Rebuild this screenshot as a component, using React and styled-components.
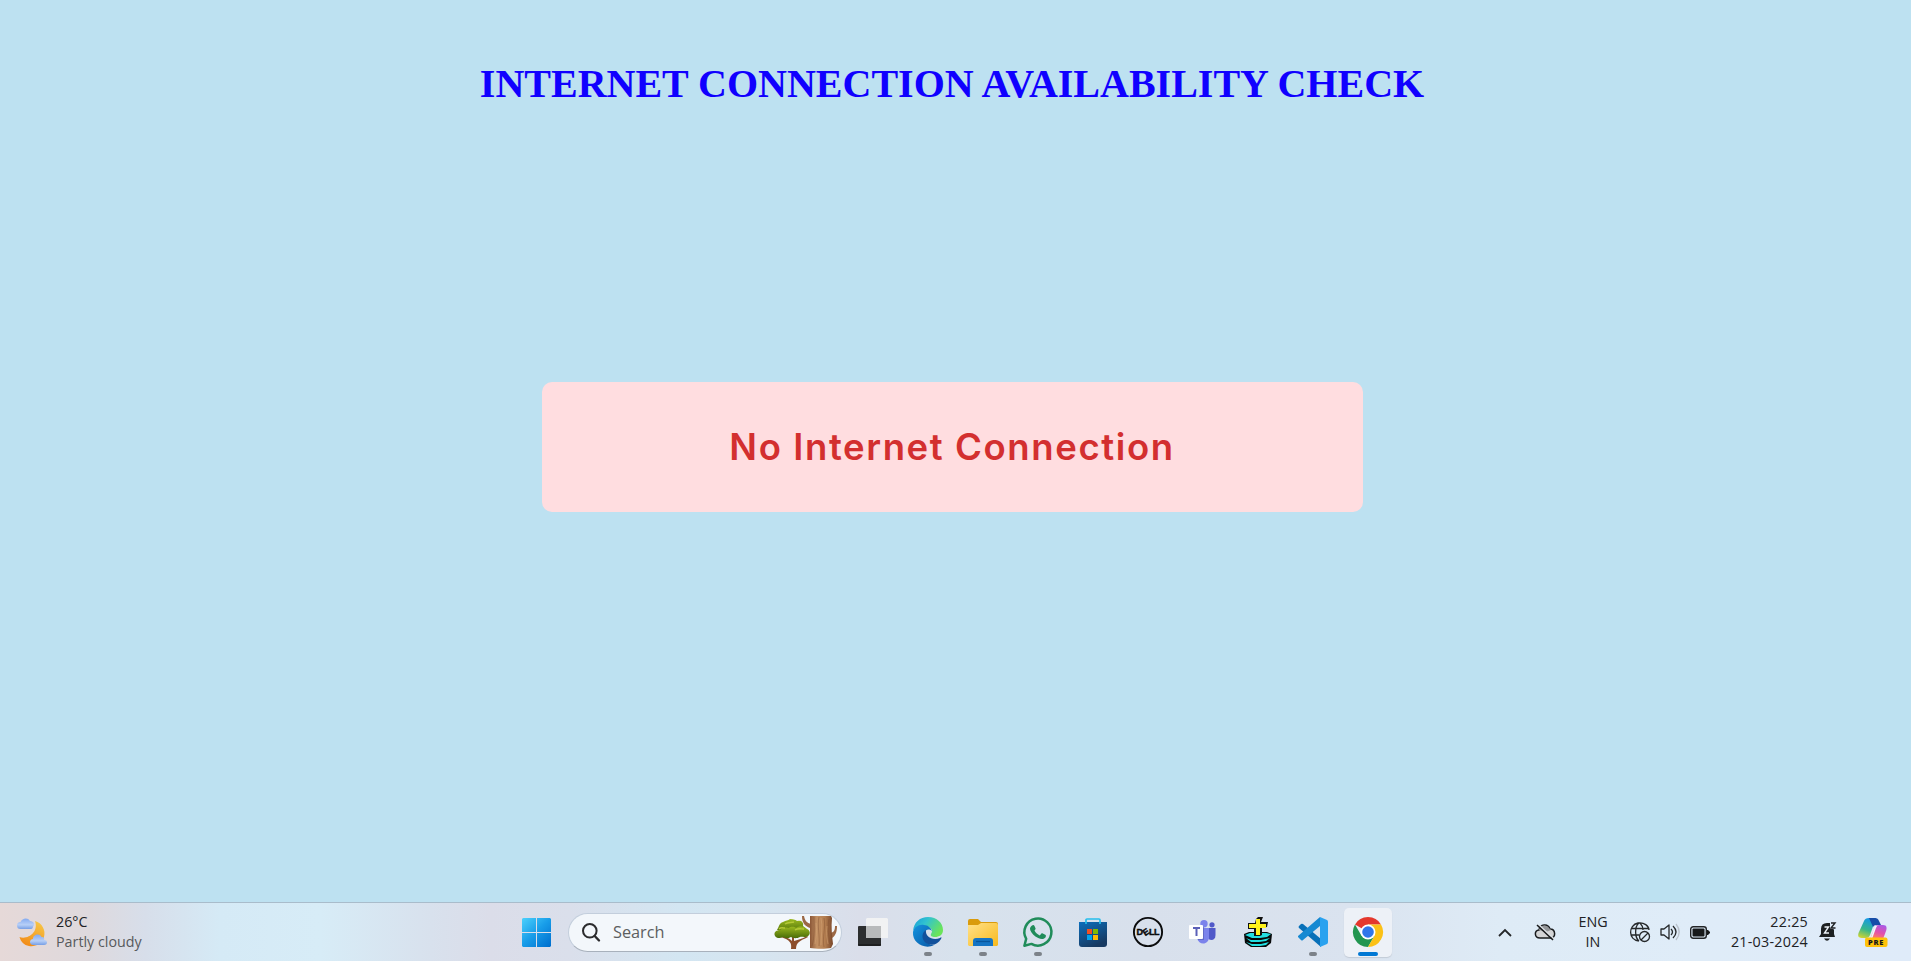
import React from "react";
import styled, { createGlobalStyle } from "styled-components";

const GlobalStyle = createGlobalStyle`
  *, *::before, *::after { box-sizing: border-box; }
  body { margin: 0; background: #bde1f1; overflow: hidden; }
  svg { display: block; flex: none; overflow: visible; }
`;

const Screen = styled.div`
  height: 100vh;
  display: flex;
  flex-direction: column;
`;

const Page = styled.main`
  flex: 1;
  display: flex;
  flex-direction: column;
  align-items: center;
  padding-right: 7px;
`;

const Title = styled.h1`
  margin: 61px 0 0;
  height: 46px;
  font: bold 40px/46px "Liberation Serif", "Times New Roman", serif;
  color: #1000ff;
  white-space: nowrap;
`;

const StatusCard = styled.section`
  width: 821px;
  height: 130px;
  margin-top: 275px;
  border-radius: 10px;
  background: #ffdde0;
  display: flex;
  align-items: center;
  justify-content: center;
`;

const StatusText = styled.p`
  margin: 0;
  font: 600 36.5px/54px Inter, "Open Sans", sans-serif;
  letter-spacing: 1.6px;
  color: #d32f2f;
  white-space: nowrap;
`;

const Taskbar = styled.footer`
  height: 59px;
  border-top: 1px solid #a9bccb;
  display: flex;
  align-items: center;
  font-family: "Open Sans", "Noto Sans", sans-serif;
  background: linear-gradient(90deg, #e6d9d8 0, #ded9dd 90px, #d7deea 145px, #d5eaf6 220px, #d7ecf7 320px,
    #d8e1ed 430px, #dbdde9 490px, #dadfeb 570px, #d3e6f2 680px, #d6e5f0 760px, #dadeea 860px,
    #d7e2ed 960px, #d8e0ec 1150px, #dae3ef 1350px, #deebf6 1500px, #dfecf8 1700px, #dfebf9 1911px);
`;

const Weather = styled.div`
  width: 509px;
  padding-left: 17px;
  display: flex;
  align-items: center;
  gap: 9px;
`;

const Lines = styled.div`
  display: flex;
  flex-direction: column;
  width: ${(p) => p.$width || "auto"};
  text-align: ${(p) => p.$align || "left"};
`;

const Line = styled.span`
  font-size: 14.3px;
  line-height: 20px;
  letter-spacing: ${(p) => p.$spacing || 0}px;
  color: ${(p) => (p.$muted ? "#57595c" : "#202124")};
  white-space: nowrap;
`;

const Apps = styled.nav`
  display: flex;
  align-items: center;
  height: 58px;
`;

const AppSlot = styled.div`
  position: relative;
  width: 55px;
  height: 58px;
  display: flex;
  align-items: center;
  justify-content: center;
`;

const AppTile = styled.div`
  width: 48px;
  height: 49px;
  border-radius: 5px;
  display: flex;
  align-items: center;
  justify-content: center;
  background: ${(p) => (p.$active ? "#edf1f7" : "transparent")};
  box-shadow: ${(p) => (p.$active ? "0 1px 1px #c3cbd6" : "none")};
`;

const Indicator = styled.span`
  position: absolute;
  bottom: 5px;
  left: 50%;
  width: ${(p) => (p.$active ? 20 : 8)}px;
  height: 4px;
  border-radius: 2px;
  transform: translateX(-50%);
  background: ${(p) => (p.$active ? "#0078d4" : "#7c8289")};
`;

const StartButton = styled.div`
  width: 59px;
  padding-left: 13px;
`;

const SearchBox = styled.div`
  width: 274px;
  height: 39px;
  margin-right: 3px;
  padding: 0 4px 0 13px;
  border: 1px solid #c3cedc;
  border-bottom-color: #a8b1bc;
  border-radius: 20px;
  background: #f3f7fb;
  display: flex;
  align-items: center;
`;

const SearchLabel = styled.span`
  flex: 1;
  padding-left: 13px;
  font-size: 16.3px;
  line-height: 22px;
  color: #5c5e60;
`;

const Tray = styled.div`
  margin-left: auto;
  padding-right: 23px;
  display: flex;
  align-items: center;
`;

const TrayGroup = styled.div`
  display: flex;
  align-items: center;
  gap: ${(p) => p.$gap || 0}px;
  margin-left: ${(p) => p.$before || 0}px;
  margin-right: ${(p) => p.$after || 0}px;
`;

const WeatherIcon = () => (
  <svg width="30" height="29" viewBox="0 0 30 29">
    <defs>
      <linearGradient id="moon" x1="0.8" y1="0" x2="0.3" y2="1">
        <stop stopColor="#f6c747" /><stop offset="1" stopColor="#f28b18" />
      </linearGradient>
      <linearGradient id="cloud" x1="0" y1="0" x2="0" y2="1">
        <stop stopColor="#83aaf1" /><stop offset=".6" stopColor="#b7cff7" /><stop offset="1" stopColor="#779fe5" />
      </linearGradient>
    </defs>
    <path d="M18 3C25 5 29 12 27 19c-2 7-9 10-15 9-5-1-8-4-9.500-9C11 22 22 14 18 3Z" fill="url(#moon)" />
    <path d="M3.500 11a3.500 3.500 0 0 1 0-7C5 0 11-1 13 3c4 0 5 4 3 5.500 0 2-1 2.500-3 2.500Z" fill="url(#cloud)" />
    <path d="M16 27c-4 0-4-6 0-6 0-5 7-6 8.500-2 3 0 3 2 2.500 3 4 0 4 5 0 5Z" fill="url(#cloud)" />
  </svg>
);

const WindowsIcon = () => (
  <svg width="29" height="29" viewBox="0 0 29 29">
    <defs>
      <linearGradient id="win" gradientUnits="userSpaceOnUse" x1="0" y1="0" x2="27" y2="29">
        <stop stopColor="#4dd1fc" /><stop offset=".5" stopColor="#189de9" /><stop offset="1" stopColor="#0070cf" />
      </linearGradient>
    </defs>
    <path d="M1 0H14V14H0V1ZM15 0H28l1 1V14H15ZM0 15H14V29H1l-1-1ZM15 15H29V28l-1 1H15Z" fill="url(#win)" />
  </svg>
);

const SearchIcon = () => (
  <svg width="18" height="19" viewBox="0 0 18 19" fill="none" stroke="#2b2b2d">
    <circle cx="7.800" cy="7.800" r="6.800" strokeWidth="2" />
    <path d="m12.700 13 4.300 4.500" strokeWidth="2.400" strokeLinecap="round" />
  </svg>
);

const TreesIcon = () => (
  <svg width="63" height="33" viewBox="0 0 63 33">
    <defs>
      <linearGradient id="bark">
        <stop stopColor="#8b5737" /><stop offset=".3" stopColor="#c39164" /><stop offset=".65" stopColor="#b47e50" /><stop offset="1" stopColor="#784629" />
      </linearGradient>
      <linearGradient id="leaf" x1="0" y1="0" x2="0" y2="1">
        <stop stopColor="#9bb91f" /><stop offset="1" stopColor="#496c08" />
      </linearGradient>
    </defs>
    <path d="M17 33c1-6-1-9-10-12l1-1c5 1 8 3 10 5V20h2v5c3-1 8-2 13-5l1 1c-8 4-12 5-12 12Z" fill="#8c4e2c" />
    <path d="M3 14c2-3 2-7 6-8 3-2 5-1 7-3 4 0 6 1 7 2 4-1 7 1 6 5 3 2 3 4 2 7Z" fill="url(#leaf)" />
    <path d="M1 20c-2-4 2-6 5-6 3-3 7-3 9-2 2-2 6-1 7 0 5-3 9-1 11 1 3 1 4 5 1 7-3 2-7 0-8 1-4 2-7 1-9 0-4 2-6 1-8 0-3 2-7 1-8-1Z" fill="url(#leaf)" />
    <path d="M5 13c2-2 4-1 6-1m0-4c3-2 6-1 9-2m1 8c3-2 6-1 9-1" stroke="#b5c937" strokeWidth="1.500" fill="none" />
    <path d="M36 12C31 10 28 7 28 0h2c1 5 3 7 7 8Zm21 5c3-1 4-3 4-7h2c0 7-2 10-6 13Z" fill="#9b6845" />
    <path d="M36 0H57l1 2c-1 9 0 18 1 26l-2 4c-5 1-15 1-21 0Z" fill="url(#bark)" />
    <path d="M40 1c0 9 1 19-2 29M45 1c-2 8 1 19 0 29M50 2c2 9-2 20 0 29M55 3c-2 8 0 19 1 25" stroke="#7b4c2d" fill="none" opacity=".4" />
    <path d="M42 7c1 8 0 15-1 21M47 2c2 8 0 18 0 27M53 10c-1 7 0 13 1 18" stroke="#d8a878" fill="none" opacity=".5" />
  </svg>
);

const TaskViewIcon = () => (
  <svg width="30" height="28" viewBox="0 0 30 28">
    <rect y="8" width="23" height="20" rx="1" fill="#2c2e2f" />
    <path d="M0 27h23" stroke="#101112" />
    <path d="M9 0H29l1 1V20H8V1Z" fill="#f1f2f3" />
    <path d="M8 8H23V20H8Z" fill="#b8babb" />
  </svg>
);

const EdgeIcon = () => (
  <svg width="30" height="30" viewBox="0 0 30 30">
    <defs>
      <linearGradient id="edgeTop" x1="0" y1="0" x2="1" y2=".5">
        <stop stopColor="#139bdc" /><stop offset=".45" stopColor="#32c3cf" /><stop offset="1" stopColor="#6be45a" />
      </linearGradient>
      <linearGradient id="edgeLow" x1="0" y1="0" x2="1" y2="1">
        <stop stopColor="#1594df" /><stop offset="1" stopColor="#0757a6" />
      </linearGradient>
    </defs>
    <path d="M0 14C1 5 7 0 15 0c9 0 15 6 15 13 0 5-4 7-8 7-3 0-5-1-4-3 3-4-1-8-6-8C6 8 2 11 0 14Z" fill="url(#edgeTop)" />
    <path d="M0 15C1 10 6 7 11 8c4 0 7 3 8 6-5-4-9 1-8 6 1 5 5 8 10 8C12 33-1 26 0 15Z" fill="url(#edgeLow)" />
    <path d="M13 13c-5 3-5 11 2 14 5 2 10 0 13-5 1-2 0-2-1-1-7 3-15-1-14-8Z" fill="#12519c" />
  </svg>
);

const FolderIcon = () => (
  <svg width="30" height="27" viewBox="0 0 30 27">
    <defs>
      <linearGradient id="folder" x1="0" y1="0" x2="1" y2="1">
        <stop stopColor="#ffe18a" /><stop offset="1" stopColor="#f8b91b" />
      </linearGradient>
    </defs>
    <path d="M0 2Q0 0 2 0h8l3 3h15q2 0 2 2v3H0Z" fill="#d99b0c" />
    <path d="M0 6h10l3-2h15q2 0 2 2v20l-1 1H1l-1-1Z" fill="url(#folder)" />
    <path d="M5 27v-5q0-3 3-3h14q3 0 3 3v5Z" fill="#1474c4" />
    <path d="M8 22.500h14" stroke="#07569d" strokeWidth="1.300" />
  </svg>
);

const WhatsAppIcon = () => (
  <svg width="30" height="30" viewBox="0 0 30 30">
    <path d="M1.400 28.700 3.200 21.800A13.500 13.500 0 1 1 8.400 26.900Z" fill="none" stroke="#208c5a" strokeWidth="2.500" strokeLinejoin="round" />
    <path d="M9 8.500c1-.9 2-.8 2.500.4l1 2.400c.3.700-.1 1.300-1 2.200 1.300 2.400 3 4 5.300 4.900l1.400-1.600c.5-.6 1-.5 1.600-.3l2.500 1.300c1 .6.700 2-.1 2.900-2 2-4.500 1.400-7 .4-4-1.700-7-5.200-7.900-7.800C6.500 11.300 7.500 9.600 9 8.500Z" fill="#208c5a" />
  </svg>
);

const StoreIcon = () => (
  <svg width="30" height="29" viewBox="0 0 30 29">
    <defs>
      <linearGradient id="store" x1="0" y1="0" x2=".5" y2="1">
        <stop stopColor="#0c6fbd" /><stop offset="1" stopColor="#173961" />
      </linearGradient>
    </defs>
    <path d="M1 4H29V26q0 3-3 3H4q-3 0-3-3Z" fill="url(#store)" />
    <path d="M8 6V2q0-1 1-1H21q1 0 1 1V6" fill="none" stroke="#25bdec" strokeWidth="1.700" />
    <path d="M9 11h5v5H9z" fill="#f25022" /><path d="M15 11h5v5h-5z" fill="#7fba00" />
    <path d="M9 17h5v5H9z" fill="#00a4ef" /><path d="M15 17h5v5h-5z" fill="#ffb900" />
  </svg>
);

const DellIcon = () => (
  <svg width="30" height="30" viewBox="0 0 30 30">
    <circle cx="15" cy="15" r="14.100" fill="none" stroke="#0b0c0d" strokeWidth="1.900" />
    <g fill="#0b0c0d" stroke="#0b0c0d" strokeWidth=".4" fontFamily="Liberation Sans, sans-serif" fontWeight="700" fontSize="9">
      <text x="3.400" y="18.200">D</text>
      <text x="-3" y="3" transform="translate(13 15) rotate(-35)">E</text>
      <text x="16" y="18.200">L</text><text x="21" y="18.200">L</text>
    </g>
  </svg>
);

const TeamsIcon = () => (
  <svg width="27" height="24" viewBox="0 0 27 24">
    <circle cx="15" cy="3.800" r="3.700" fill="#7b83eb" /><circle cx="23" cy="4.800" r="2.600" fill="#5059c9" />
    <path d="M18 8h8.500v7c0 5-4 6-7 4Z" fill="#5059c9" />
    <path d="M8 8H20v9c0 8-10 9-12 1Z" fill="#7b83eb" />
    <path d="M8 7h7v13H9Z" fill="#555cb5" opacity=".65" />
    <rect y="5" width="14" height="14" rx="1" fill="#fff" />
    <path d="M4 8h7M7.500 8v8" stroke="#5b60b8" strokeWidth="2" />
  </svg>
);

const DiscIcon = () => (
  <svg width="28" height="30" viewBox="0 0 28 30">
    <path d="M0 17 5 15H23l5 2-1 9-5 4H7l-6-4Z" fill="#070909" />
    <path d="M1 18 6 16h16l5 1-4 3-7 1H8ZM2 21l5 2h10l9-2-4 3-7 1H7ZM2 25l6 2h9l8-2-3 3-6 1H8Z" fill="#22dfe2" />
    <path d="M14 0h5l-2 5h7l-1 5-5 1v7l-2 1h-6v-7H4V6h7l1-4Z" fill="#111" />
    <path d="M12 2h4v5h6v4h-6v7h-4v-7H5V7h7Z" fill="#fff21c" />
  </svg>
);

const CodeIcon = () => (
  <svg width="30" height="30" viewBox="0 0 30 30">
    <path d="m1 9 2-2q1-.6 2 0l18 15v8L1 11q-1-1 0-2Z" fill="#0870b8" />
    <path d="M0 19 22 0v9L5 23q-1 1-2 0l-3-3Z" fill="#1689d2" />
    <path d="m22 0 7 3q1 .5 1 2v20q0 1.500-1 2l-7 3Z" fill="#2aa2ef" />
  </svg>
);

const ChromeIcon = () => (
  <svg width="30" height="30" viewBox="0 0 30 30">
    <path d="M15 15 2 7.500A15 15 0 0 1 28 7.500H15Z" fill="#e4382d" />
    <path d="M2 7.500A15 15 0 0 0 15 30l6.500-11.200L15 15 8.500 18.800Z" fill="#229650" />
    <path d="M15 7.500H28A15 15 0 0 1 15 30l6.500-11.200Z" fill="#fbc116" />
    <circle cx="15" cy="15" r="7.500" fill="#fff" /><circle cx="15" cy="15" r="5.800" fill="#2f76ea" />
  </svg>
);

const ChevronIcon = () => (
  <svg width="14" height="9" viewBox="0 0 14 9" fill="none" stroke="#242628" strokeWidth="1.800">
    <path d="m1 8 6-6 6 6" />
  </svg>
);

const CloudOffIcon = () => (
  <svg width="20" height="17" viewBox="0 0 20 17">
    <path d="M5 14C-1 14-1 6 4 6 5 0 13-1 15 5c6 0 6 9 1 9Z" fill="#d3d4d5" stroke="#191b1d" strokeWidth="1.500" />
    <path d="M4 6C5 1 11 0 14 4l2 2-5 2Z" fill="#949699" />
    <path d="M4 1 19 15" stroke="#dde1e5" strokeWidth="1.500" /><path d="M2 1 18 16" stroke="#151719" strokeWidth="1.500" />
  </svg>
);

const GlobeOffIcon = () => (
  <svg width="20" height="20" viewBox="0 0 20 20" fill="none" stroke="#25282a" strokeWidth="1.300">
    <path d="M9 19C-2 18-2 3 8 1c6-1 11 3 11 7M1 6.500h17.500M1 13h8M9 19C5 16 4 5 9 1M10 1c2 2 3 5 3 7" />
    <circle cx="14.500" cy="14.500" r="5" /><path d="m11 18 7-7" />
  </svg>
);

const SpeakerIcon = () => (
  <svg width="20" height="18" viewBox="0 0 20 18" fill="none" stroke="#25282a" strokeWidth="1.300" strokeLinejoin="round">
    <path d="M1 6h3l5-4v14l-5-4H1ZM11 6c2 2 2 4 0 6m2-9c4 4 4 8 0 12" />
    <path d="M16 1c4 5 4 11 0 16" stroke="#b9c1cb" />
  </svg>
);

const BatteryIcon = () => (
  <svg width="20" height="13" viewBox="0 0 20 13">
    <rect x=".7" y=".7" width="15.600" height="11.600" rx="2.500" fill="none" stroke="#222426" strokeWidth="1.400" />
    <rect x="2.500" y="2.500" width="12" height="8" rx="1" fill="#17191a" />
    <path d="M17 4h1l2 2v1l-2 2h-1Z" fill="#17191a" />
  </svg>
);

const BellIcon = () => (
  <svg width="18" height="20" viewBox="0 0 18 20">
    <path d="M2 12V7q0-6 6-6h3l4 7v4l1 3H0Z" fill="#1d2022" />
    <path d="M5 16.500h6q-3 4.500-6 0Z" fill="#1d2022" />
    <path d="M5.500 5h4l-4 6h4.500" stroke="#edf2f8" strokeWidth="1.400" fill="none" />
    <path d="M11 0h7v7h-7Z" fill="#dfebf8" />
    <path d="M12 1h4l-4 5h4.500" stroke="#202224" strokeWidth="1.400" fill="none" />
  </svg>
);

const CopilotIcon = () => (
  <svg width="30" height="29" viewBox="0 0 30 29">
    <defs>
      <linearGradient id="coLeft" x1=".5" y1="0" x2=".2" y2="1">
        <stop stopColor="#1598e5" /><stop offset=".55" stopColor="#36b78c" /><stop offset="1" stopColor="#d2d52f" />
      </linearGradient>
      <linearGradient id="coRight" x1=".8" y1="0" x2=".4" y2="1">
        <stop stopColor="#a65be8" /><stop offset=".55" stopColor="#e250ac" /><stop offset="1" stopColor="#ff805f" />
      </linearGradient>
    </defs>
    <path d="M6 3q1-3 5-3h7l-6 17q-1 3-4 3H4c-5 0-4-4-3-6Z" fill="url(#coLeft)" />
    <path d="M11 0h6q3 0 4 3l2 4h-5q-2 0-3 2Z" fill="#174da8" />
    <path d="M18 7h7c4 0 4 3 3 6l-3 8H12Z" fill="url(#coRight)" />
    <path d="m17 8-4 11q-1 2-4 2h5l4-11q1-3 3-3Z" fill="#f2f5fa" />
    <rect x="7" y="19.500" width="22.500" height="9.500" rx="2" fill="#ffc20a" />
    <text x="10" y="27" fill="#17191a" fontFamily="Open Sans, sans-serif" fontWeight="800" fontSize="7.500" letterSpacing=".7">PRE</text>
  </svg>
);

const apps = [
  { name: "taskview", Icon: TaskViewIcon },
  { name: "edge", Icon: EdgeIcon, running: true },
  { name: "files", Icon: FolderIcon, running: true },
  { name: "whatsapp", Icon: WhatsAppIcon, running: true },
  { name: "store", Icon: StoreIcon },
  { name: "dell", Icon: DellIcon },
  { name: "teams", Icon: TeamsIcon },
  { name: "disc", Icon: DiscIcon },
  { name: "code", Icon: CodeIcon, running: true },
  { name: "chrome", Icon: ChromeIcon, running: true, active: true },
];

export default function App() {
  return (
    <Screen>
      <GlobalStyle />
      <Page>
        <Title>INTERNET CONNECTION AVAILABILITY CHECK</Title>
        <StatusCard><StatusText>No Internet Connection</StatusText></StatusCard>
      </Page>
      <Taskbar>
        <Weather>
          <WeatherIcon />
          <Lines>
            <Line>26°C</Line>
            <Line $muted>Partly cloudy</Line>
          </Lines>
        </Weather>
        <Apps>
          <StartButton><WindowsIcon /></StartButton>
          <SearchBox>
            <SearchIcon />
            <SearchLabel>Search</SearchLabel>
            <TreesIcon />
          </SearchBox>
          {apps.map(({ name, Icon, running, active }) => (
            <AppSlot key={name}>
              <AppTile $active={active}><Icon /></AppTile>
              {running && <Indicator $active={active} />}
            </AppSlot>
          ))}
        </Apps>
        <Tray>
          <TrayGroup $gap={23} $after={23}><ChevronIcon /><CloudOffIcon /></TrayGroup>
          <Lines $width="30px" $align="center"><Line>ENG</Line><Line>IN</Line></Lines>
          <TrayGroup $gap={10} $before={22} $after={19}>
            <GlobeOffIcon /><SpeakerIcon /><BatteryIcon />
          </TrayGroup>
          <Lines $width="79px" $align="right">
            <Line $spacing={0.25}>22:25</Line>
            <Line $spacing={0.25}>21-03-2024</Line>
          </Lines>
          <TrayGroup $gap={21} $before={11}><BellIcon /><CopilotIcon /></TrayGroup>
        </Tray>
      </Taskbar>
    </Screen>
  );
}
